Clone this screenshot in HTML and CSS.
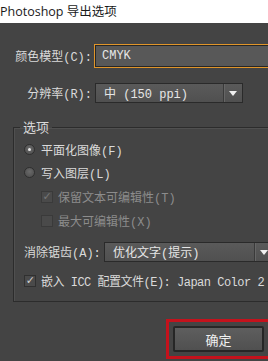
FILE: index.html
```html
<!DOCTYPE html>
<html lang="zh-CN">
<head>
  <meta charset="UTF-8">
  <meta name="viewport" content="width=device-width, initial-scale=1.0">
  <title>Photoshop 导出选项</title>
  <link rel="stylesheet" href="styles.css">
</head>
<body>
  <!-- Title bar -->
  <div class="titlebar">Photoshop 导出选项</div>

  <!-- Dialog body -->
  <div class="dialog">
    <div class="form-row row-color">
      <span class="label">颜色模型(C):</span>
      <div class="field field-focus">CMYK</div>
    </div>

    <div class="form-row row-res">
      <span class="label">分辨率(R):</span>
      <div class="select select-res">
        <span class="select-text">中 (150 ppi)</span>
        <span class="select-arrow"></span>
      </div>
    </div>

    <fieldset class="group">
      <legend>选项</legend>

      <div class="opt-row opt-first">
        <span class="radio checked"></span>
        <span>平面化图像(F)</span>
      </div>
      <div class="opt-row">
        <span class="radio"></span>
        <span>写入图层(L)</span>
      </div>

      <div class="opt-row sub sub-first disabled">
        <span class="check checked">&#10003;</span>
        <span>保留文本可编辑性(T)</span>
      </div>
      <div class="opt-row sub disabled">
        <span class="check"></span>
        <span>最大可编辑性(X)</span>
      </div>

      <div class="form-row row-aa">
        <span class="aa-label">消除锯齿(A):</span>
        <div class="select select-aa">
          <span class="select-text">优化文字(提示)</span>
          <span class="select-arrow"></span>
        </div>
      </div>

      <div class="opt-row row-icc">
        <span class="check checked">&#10003;</span>
        <span>嵌入 ICC 配置文件(E): Japan Color 2</span>
      </div>
    </fieldset>

    <!-- Highlighted OK button -->
    <div class="highlight">
      <button class="button">确定</button>
    </div>
  </div>
</body>
</html>
```

FILE: styles.css
```css
/* General Styles */
body {
  margin: 0;
  padding: 0;
  width: 268px;
  height: 361px;
  overflow: hidden;
  background-color: #444444;
  font-family: "Liberation Mono", "Noto Sans CJK SC", monospace;
  font-size: 12px;
  color: #dadada;
}

.titlebar {
  height: 23px;
  line-height: 23px;
  background-color: #ffffff;
  color: #1a1a1a;
  font-family: "Open Sans", "Noto Sans CJK SC", sans-serif;
  font-size: 12.5px;
  white-space: nowrap;
}

.dialog {
  padding-top: 22px;
  white-space: nowrap;
  overflow: hidden;
}

/* Rows with a label and a control */
.form-row {
  display: flex;
  align-items: center;
}

.label {
  width: 92px;
  text-align: right;
  flex-shrink: 0;
}

.row-color {
  height: 22px;
}

.row-res {
  height: 20px;
  margin-top: 16px;
}

.field {
  flex-shrink: 0;
  margin-left: 3px;
  width: 200px;
  height: 20px;
  line-height: 20px;
  padding-left: 6px;
  background-color: #585858;
  border: 1px solid #262626;
  color: #e6e6e6;
}

.field-focus {
  box-shadow: 0 0 0 1px #e0952a;
}

.select {
  flex-shrink: 0;
  display: flex;
  align-items: center;
  height: 18px;
  border: 1px solid #2a2a2a;
  background: linear-gradient(#5a5a5a, #505050);
  color: #e6e6e6;
}

.select-res {
  margin-left: 3px;
  width: 146px;
}

.select-text {
  flex: 1;
  padding-left: 8px;
}

.select-arrow {
  width: 18px;
  height: 18px;
  border-left: 1px solid #3a3a3a;
  box-shadow: inset 1px 0 0 #666666;
  position: relative;
}

.select-arrow::after {
  content: "";
  position: absolute;
  left: 5px;
  top: 7px;
  border-left: 4px solid transparent;
  border-right: 4px solid transparent;
  border-top: 5px solid #f0f0f0;
}

/* Options group */
.group {
  margin: 16px 0 0 13px;
  padding: 0 0 9px 0;
  width: 320px;
  min-width: 320px;
  box-sizing: border-box;
  border: 1px solid #2c2c2c;
  box-shadow: inset 1px 1px 0 #505050;
}

.group legend {
  margin-left: 6px;
  padding: 0 3px;
  line-height: 16px;
  font-family: "Noto Sans CJK SC", sans-serif;
  font-size: 13px;
}

.opt-row {
  display: flex;
  align-items: center;
  height: 23px;
  padding-left: 10px;
}

.opt-first {
  margin-top: 3px;
}

.opt-row.sub {
  height: 24px;
  padding-left: 27px;
}

.sub-first {
  margin-top: 1px;
}

.disabled {
  color: #8c8c8c;
}

.radio {
  width: 11px;
  height: 11px;
  border-radius: 50%;
  margin-right: 6px;
  background: radial-gradient(circle at 50% 40%, #6a6a6a, #4a4a4a);
  border: 1px solid #2f2f2f;
  box-sizing: border-box;
  position: relative;
}

.radio.checked::after {
  content: "";
  position: absolute;
  left: 3px;
  top: 3px;
  width: 3px;
  height: 3px;
  border-radius: 50%;
  background-color: #e8e8e8;
}

.check {
  width: 12px;
  height: 12px;
  margin-right: 5px;
  box-sizing: border-box;
  border: 1px solid #303030;
  background-color: #4a4a4a;
  font-family: "DejaVu Sans", sans-serif;
  font-size: 11px;
  line-height: 10px;
  text-align: center;
  color: #cfcfcf;
}

.disabled .check {
  color: #777777;
  border-color: #3a3a3a;
}

.row-aa {
  margin-top: 9px;
  height: 20px;
}

.aa-label {
  padding-left: 10px;
  width: 80px;
  flex-shrink: 0;
}

.select-aa {
  width: 168px;
}

.row-icc {
  margin-top: 7px;
  letter-spacing: -0.5px;
}

/* OK button with red annotation box */
.highlight {
  margin: 17px 0 0 166px;
  width: 91px;
  padding: 4px;
  border: 3px solid #c4121c;
}

.button {
  display: block;
  width: 91px;
  height: 26px;
  padding: 0;
  border: 2px solid #262626;
  border-radius: 2px;
  background: linear-gradient(#5e5e5e, #505050);
  color: #f0f0f0;
  font-family: "Noto Sans CJK SC", sans-serif;
  font-size: 13px;
}
```
